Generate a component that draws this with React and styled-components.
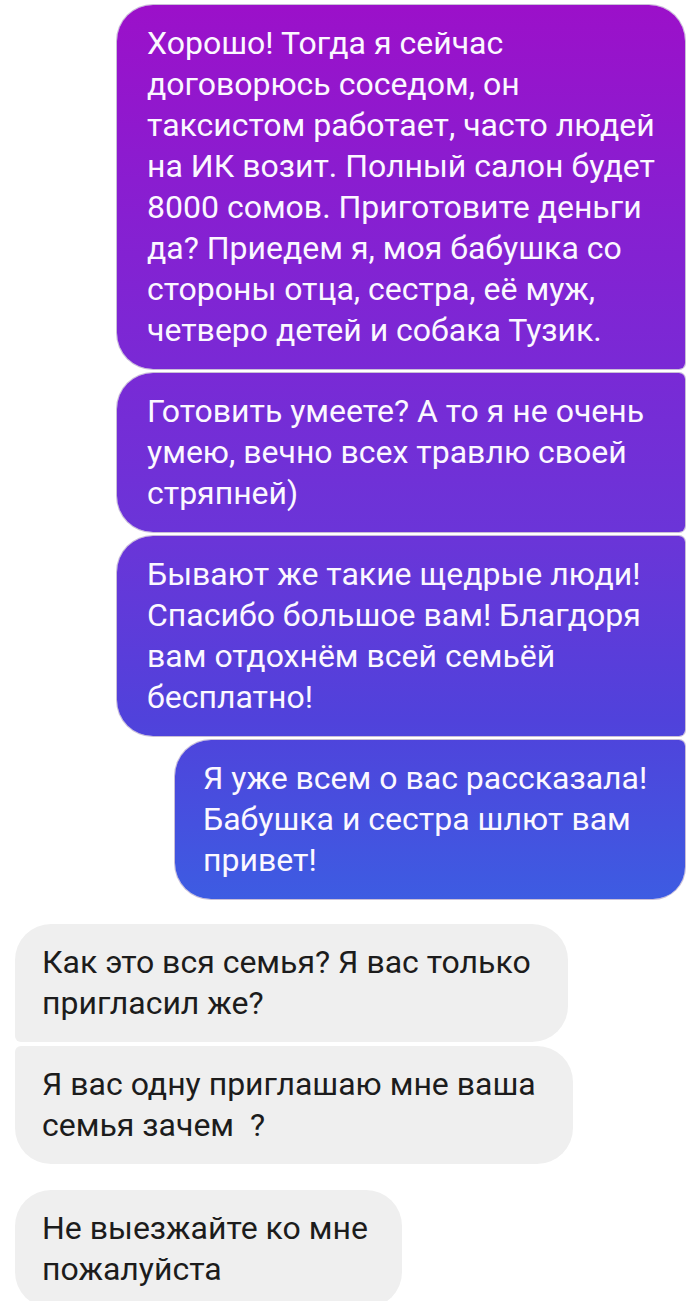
import React from "react";
import styled, { createGlobalStyle } from "styled-components";

const Global = createGlobalStyle`
  html, body { margin: 0; padding: 0; background: #ffffff; }
  body { font-family: Roboto, "Noto Sans", "Liberation Sans", sans-serif; }
`;

const Page = styled.main`
  width: 700px;
  min-height: 1301px;
  box-sizing: border-box;
  padding-top: 5px;
  display: flex;
  flex-direction: column;
  overflow: hidden;
`;

const Group = styled.section`
  display: flex;
  flex-direction: column;
  gap: ${(p) => p.$gap || 4}px;
  align-items: ${(p) => (p.$mine ? "flex-end" : "flex-start")};
  padding: ${(p) => (p.$mine ? "0 15px 0 0" : "0 0 0 15px")};
  margin-top: ${(p) => p.$top || 0}px;
`;

const Bubble = styled.div`
  box-sizing: border-box;
  width: ${(p) => p.$w}px;
  border-radius: ${(p) => p.$r};
  font-size: 32px;
  line-height: 41px;
  letter-spacing: 0;
  white-space: pre;
`;

const Sent = styled(Bubble)`
  color: #fbf8ff;
  padding: 18px 16px 18px ${(p) => p.$pl || 30}px;
  background-image: linear-gradient(
    180deg,
    #9c10c9 0px,
    #8a1dd0 180px,
    #7a29d5 360px,
    #6a35d8 540px,
    #5042db 720px,
    #3d5ce2 900px
  );
  background-attachment: fixed;
  box-shadow: 0 0 0 1px rgba(60, 20, 110, 0.28);
`;

const Received = styled(Bubble)`
  color: #1c1c1c;
  background: #efefef;
  padding: 18px 16px 18px 27px;
`;

const sent = [
  {
    w: 568,
    r: "36px 36px 6px 36px",
    lines: [
      "Хорошо! Тогда я сейчас",
      "договорюсь соседом, он",
      "таксистом работает, часто людей",
      "на ИК возит. Полный салон будет",
      "8000 сомов. Приготовите деньги",
      "да? Приедем я, моя бабушка со",
      "стороны отца, сестра, её муж,",
      "четверо детей и собака Тузик.",
    ],
  },
  {
    w: 568,
    r: "36px 6px 6px 36px",
    lines: [
      "Готовить умеете? А то я не очень",
      "умею, вечно всех травлю своей",
      "стряпней)",
    ],
  },
  {
    w: 568,
    r: "36px 6px 6px 36px",
    lines: [
      "Бывают же такие щедрые люди!",
      "Спасибо большое вам! Благдоря",
      "вам отдохнём всей семьёй",
      "бесплатно!",
    ],
  },
  {
    w: 510,
    pl: 28,
    r: "36px 6px 32px 36px",
    lines: [
      "Я уже всем о вас рассказала!",
      "Бабушка и сестра шлют вам",
      "привет!",
    ],
  },
];

const received = [
  [
    {
      w: 553,
      r: "36px 36px 36px 6px",
      lines: ["Как это вся семья? Я вас только", "пригласил же?"],
    },
    {
      w: 558,
      r: "6px 36px 36px 36px",
      lines: ["Я вас одну приглашаю мне ваша", "семья зачем  ?"],
    },
  ],
  [
    {
      w: 387,
      r: "36px 36px 36px 36px",
      lines: ["Не выезжайте ко мне", "пожалуйста"],
    },
  ],
];

const Lines = ({ lines }) =>
  lines.map((l, i) => (
    <React.Fragment key={i}>
      {l}
      {i < lines.length - 1 && <br />}
    </React.Fragment>
  ));

export default function App() {
  return (
    <>
      <Global />
      <Page>
        <Group $mine>
          {sent.map((m, i) => (
            <Sent key={i} $w={m.w} $r={m.r} $pl={m.pl}>
              <Lines lines={m.lines} />
            </Sent>
          ))}
        </Group>
        {received.map((g, gi) => (
          <Group key={gi} $top={gi === 0 ? 25 : 26}>
            {g.map((m, i) => (
              <Received key={i} $w={m.w} $r={m.r}>
                <Lines lines={m.lines} />
              </Received>
            ))}
          </Group>
        ))}
      </Page>
    </>
  );
}
